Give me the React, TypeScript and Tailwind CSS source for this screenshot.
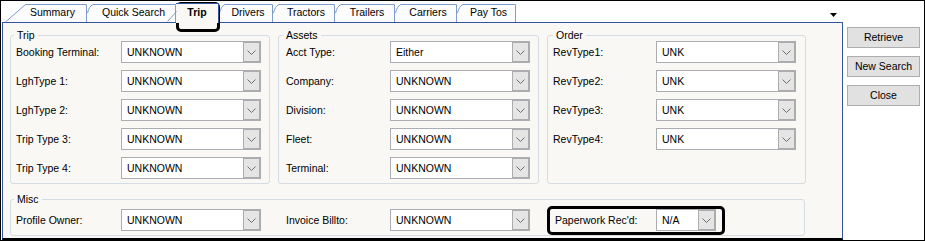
import React from "react";

const Chevron = () => (
  <svg width="9" height="5" viewBox="0 0 9 5">
    <path d="M0.5 0.5 L4.5 4.5 L8.5 0.5" fill="none" stroke="#6e6e6e" strokeWidth="1" />
  </svg>
);

function Combo({ value, small = false }: { value: string; small?: boolean }) {
  return (
    <div
      className={`${small ? "w-[60px]" : "w-[140px]"} h-[22px] shrink-0 border border-[#abadb3] bg-white flex items-center`}
    >
      <span className="flex-1 pl-[5px] whitespace-nowrap">{value}</span>
      <div className="w-[17px] h-[20px] border border-[#acacac] bg-[#e5e5e5] flex items-center justify-center">
        <Chevron />
      </div>
    </div>
  );
}

function Row({ label, value, lw }: { label: string; value: string; lw: string }) {
  return (
    <div className="flex items-center h-[22px]">
      <span className={`${lw} shrink-0 whitespace-nowrap`}>{label}</span>
      <Combo value={value} />
    </div>
  );
}

function Tab({ label, w, cls }: { label: string; w: number; cls: string }) {
  return (
    <div className={`${cls} relative h-[18px] shrink-0 flex justify-center pt-[3px] pl-[4px] whitespace-nowrap`}>
      <svg className="absolute left-0 top-0" width={w} height={18}>
        <path d={`M0 18 V9 C1 5 3 1 6 0 H${w} V18 Z`} fill="#fcfcfc" />
        <path d={`M0.5 9 C1.5 5 3 1.5 6 0.5 H${w - 0.5} V18`} fill="none" stroke="#7f9ccb" strokeWidth="1" />
      </svg>
      <span className="relative">{label}</span>
    </div>
  );
}

export default function App() {
  return (
    <div className="relative w-[925px] h-[241px] border border-black bg-white overflow-hidden font-['Liberation_Sans',Arial,sans-serif] text-[10.5px] text-black leading-none">
      <div className="flex h-full">
        <div className="ml-[1px] w-[841px] shrink-0 flex flex-col">
          {/* tab strip */}
          <div className="h-[21px] shrink-0 flex items-end">
            <div className="relative ml-[3px] w-[82px] h-[18px] shrink-0 pt-[3px] pl-[25px] whitespace-nowrap">
              <svg className="absolute left-0 top-0" width={82} height={18}>
                <path d="M0 18 L20 0 H82 V18 Z" fill="#fcfcfc" />
                <path d="M0.5 18 L20.5 0.5 H81.5 V18" fill="none" stroke="#7f9ccb" strokeWidth="1" />
              </svg>
              <span className="relative">Summary</span>
            </div>
            <Tab label="Quick Search" w={89} cls="w-[89px]" />
            <div className="relative z-10 w-[43px] h-[20px] mb-[-1px] shrink-0 bg-[#f9f8f4] border-t border-r border-[#33539e] flex justify-center pt-[3px] font-bold">
              <svg className="absolute left-[-9px] bottom-[1px]" width={10} height={11}>
                <path d="M0.5 10.5 L9.5 0.5" stroke="#7f9ccb" strokeWidth="1" fill="none" />
              </svg>
              Trip
            </div>
            <Tab label="Drivers" w={54} cls="w-[54px]" />
            <Tab label="Tractors" w={62} cls="w-[62px]" />
            <Tab label="Trailers" w={60} cls="w-[60px]" />
            <Tab label="Carriers" w={62} cls="w-[62px]" />
            <Tab label="Pay Tos" w={59} cls="w-[59px]" />
            <div className="ml-auto mr-[6px] self-start mt-[12px]">
              <svg width={7} height={4}>
                <polygon points="0,0 7,0 3.5,4" fill="#000" />
              </svg>
            </div>
          </div>

          {/* panel */}
          <div className="flex-1 border border-[#33539e] border-b-2 border-b-black bg-[#f9f8f4] pt-[6px] pl-[7px] flex flex-col">
            <div className="flex gap-[8px]">
              <fieldset className="w-[260px] h-[155px] border border-[#d5dce3] rounded-[3px]">
                <legend className="ml-[3px] px-[3px] leading-[12px]">Trip</legend>
                <div className="flex flex-col gap-[7px] pl-[5px]">
                  <Row lw="w-[105px]" label="Booking Terminal:" value="UNKNOWN" />
                  <Row lw="w-[105px]" label="LghType 1:" value="UNKNOWN" />
                  <Row lw="w-[105px]" label="LghType 2:" value="UNKNOWN" />
                  <Row lw="w-[105px]" label="Trip Type 3:" value="UNKNOWN" />
                  <Row lw="w-[105px]" label="Trip Type 4:" value="UNKNOWN" />
                </div>
              </fieldset>
              <fieldset className="w-[261px] h-[155px] border border-[#d5dce3] rounded-[3px]">
                <legend className="ml-[4px] px-[3px] leading-[12px]">Assets</legend>
                <div className="flex flex-col gap-[7px] pl-[7px]">
                  <Row lw="w-[104px]" label="Acct Type:" value="Either" />
                  <Row lw="w-[104px]" label="Company:" value="UNKNOWN" />
                  <Row lw="w-[104px]" label="Division:" value="UNKNOWN" />
                  <Row lw="w-[104px]" label="Fleet:" value="UNKNOWN" />
                  <Row lw="w-[104px]" label="Terminal:" value="UNKNOWN" />
                </div>
              </fieldset>
              <fieldset className="w-[259px] h-[155px] border border-[#d5dce3] rounded-[3px]">
                <legend className="ml-[5px] px-[3px] leading-[12px]">Order</legend>
                <div className="flex flex-col gap-[7px] pl-[5px]">
                  <Row lw="w-[103px]" label="RevType1:" value="UNK" />
                  <Row lw="w-[103px]" label="RevType2:" value="UNK" />
                  <Row lw="w-[103px]" label="RevType3:" value="UNK" />
                  <Row lw="w-[103px]" label="RevType4:" value="UNK" />
                </div>
              </fieldset>
            </div>

            <fieldset className="mt-[9px] w-[795px] h-[43px] border border-[#d5dce3] rounded-[3px]">
              <legend className="ml-[3px] px-[3px] leading-[12px]">Misc</legend>
              <div className="flex pt-[4px]">
                <div className="w-[267px] shrink-0 pl-[5px] flex items-center">
                  <span className="w-[105px] shrink-0">Profile Owner:</span>
                  <Combo value="UNKNOWN" />
                </div>
                <div className="w-[269px] shrink-0 pl-[8px] flex items-center">
                  <span className="w-[104px] shrink-0">Invoice Billto:</span>
                  <Combo value="UNKNOWN" />
                </div>
                <div className="pl-[8px] flex items-center">
                  <span className="w-[101px] shrink-0 whitespace-nowrap">Paperwork Rec'd:</span>
                  <Combo value="N/A" small />
                </div>
              </div>
            </fieldset>
          </div>
        </div>

        {/* buttons */}
        <div className="ml-[4px] pt-[26px] flex flex-col gap-[8px]">
          <button className="w-[73px] h-[21px] border border-[#adadad] bg-[#e1e1e1] flex items-center justify-center">Retrieve</button>
          <button className="w-[73px] h-[21px] border border-[#adadad] bg-[#e1e1e1] flex items-center justify-center">New Search</button>
          <button className="w-[73px] h-[21px] border border-[#adadad] bg-[#e1e1e1] flex items-center justify-center">Close</button>
        </div>
      </div>

      {/* highlight annotations */}
      <div className="absolute left-[175px] top-[1px] w-[44px] h-[30px] border-[3px] border-black rounded-[5px] pointer-events-none" />
      <div className="absolute left-[546px] top-[205px] w-[178px] h-[29px] border-[3px] border-black rounded-[5px] pointer-events-none" />
    </div>
  );
}
